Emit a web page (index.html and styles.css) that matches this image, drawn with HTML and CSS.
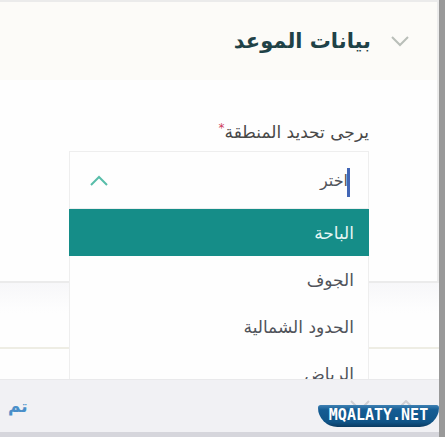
FILE: index.html
```html
<!DOCTYPE html>
<html lang="ar" dir="rtl">
<head>
<meta charset="utf-8">
<meta name="viewport" content="width=device-width, initial-scale=1">
<title>بيانات الموعد</title>
<link rel="stylesheet" href="styles.css">
</head>
<body>
<main class="page">
  <section class="card">
    <header class="card-header">
      <svg class="chevron" viewBox="0 0 18 12" aria-hidden="true"><path d="M1 2l8 8 8-8"/></svg>
      <h1 class="title">بيانات الموعد</h1>
    </header>
    <div class="card-body">
      <label class="label" for="region">يرجى تحديد المنطقة<span class="required">*</span></label>
      <div class="combo">
        <div class="control">
          <input class="input" id="region" type="text" role="combobox" aria-expanded="true" aria-controls="regions" value="اختر">
          <span class="caret"></span>
          <svg class="chevron chevron-open" viewBox="0 0 18 12" aria-hidden="true"><path d="M1 11l8-8 8 8"/></svg>
        </div>
        <ul class="options" id="regions">
          <li><button class="option option-active" type="button">الباحة</button></li>
          <li><button class="option" type="button">الجوف</button></li>
          <li><button class="option" type="button">الحدود الشمالية</button></li>
          <li><button class="option" type="button">الرياض</button></li>
        </ul>
      </div>
    </div>
  </section>
  <div class="next-section"></div>
</main>
<footer class="toolbar">
  <nav class="arrows">
    <button class="arrow" type="button" aria-label="السابق"><svg viewBox="0 0 22 12" aria-hidden="true"><path d="M2 10l9-9 9 9"/></svg></button>
    <button class="arrow" type="button" aria-label="التالي"><svg viewBox="0 0 22 12" aria-hidden="true"><path d="M2 1l9 9 9-9"/></svg></button>
  </nav>
  <button class="done" type="button">تم</button>
  <div class="badge" dir="ltr">MQALATY.NET</div>
</footer>
</body>
</html>
```
FILE: styles.css
```css
* {
  box-sizing: border-box;
}

body {
  margin: 0;
  height: 100vh;
  display: flex;
  flex-direction: column;
  border-right: 6px solid #999;
  background: #fefefe;
  font-family: "DejaVu Sans", sans-serif;
  color: #50535a;
}

button,
input {
  font: inherit;
  color: inherit;
  border: 0;
  background: none;
  padding: 0;
}

svg {
  fill: none;
  stroke: currentColor;
  stroke-width: 2;
}

.page {
  flex: 1;
  min-height: 0;
  overflow: hidden;
}

.card {
  border: 2px solid #ebebeb;
  border-left: 0;
}

.card-header {
  display: flex;
  align-items: center;
  gap: 20px;
  height: 78px;
  padding: 0 28px;
  background: #fcfbf8;
}

.chevron {
  width: 18px;
  height: 12px;
  color: #b9beb9;
}

.title {
  margin: 0;
  font-size: 21px;
  line-height: 32px;
  color: #1f4247;
}

.card-body {
  height: 201px;
  padding: 36px 68px 0 69px;
}

.label {
  display: block;
  font-size: 17px;
  line-height: 32px;
  color: #484848;
}

.required {
  font-size: 12px;
  vertical-align: top;
  line-height: 24px;
  color: #cf3f5c;
}

.combo {
  position: relative;
  margin-top: 3px;
}

.control {
  position: relative;
  display: flex;
  align-items: center;
  height: 58px;
  padding: 0 20px;
  border: 1px solid #eee;
}

.input {
  flex: 1;
  min-width: 0;
  height: 32px;
  font-size: 16px;
  outline: 0;
}

.caret {
  position: absolute;
  right: 18px;
  top: 16px;
  width: 3px;
  height: 29px;
  background: #4266b5;
}

.chevron-open {
  color: #58bda9;
}

.options {
  position: absolute;
  inset: 58px 0 auto;
  margin: 0;
  padding: 0;
  list-style: none;
  background: #fefefe;
  box-shadow: inset 1px 0 #eee, inset -1px 0 #eee;
}

.option {
  display: block;
  width: 100%;
  height: 47px;
  padding: 0 15px;
  font-size: 17px;
  text-align: right;
}

.option-active {
  background: #158d88;
  color: #e6f7f5;
}

.next-section {
  height: 66px;
  border-bottom: 2px solid #eeede4;
  background: linear-gradient(#f7f7f9, #fefefe 30px);
}

.toolbar {
  position: relative;
  display: flex;
  align-items: center;
  justify-content: space-between;
  height: 58px;
  padding: 0 22px 0 8px;
  border-top: 1px solid #e9e9eb;
  border-bottom: 5px solid #d6d6dc;
  background: #f1f1f4;
}

.arrows {
  display: flex;
  gap: 24px;
}

.arrow {
  width: 22px;
  height: 12px;
  color: #cfcfd3;
}

.arrow svg {
  display: block;
}

.done {
  font-size: 17px;
  font-weight: bold;
  color: #4a8fc9;
}

.badge {
  position: absolute;
  right: 0;
  bottom: 5px;
  width: 121px;
  height: 22px;
  border-radius: 3px 3px 22px 22px;
  background: linear-gradient(#3f81b3, #145c93 5px, #105487 17px, #0a3a61);
  color: #fff;
  font: bold 15px/21px "DejaVu Sans Mono", monospace;
  text-align: center;
}
```
